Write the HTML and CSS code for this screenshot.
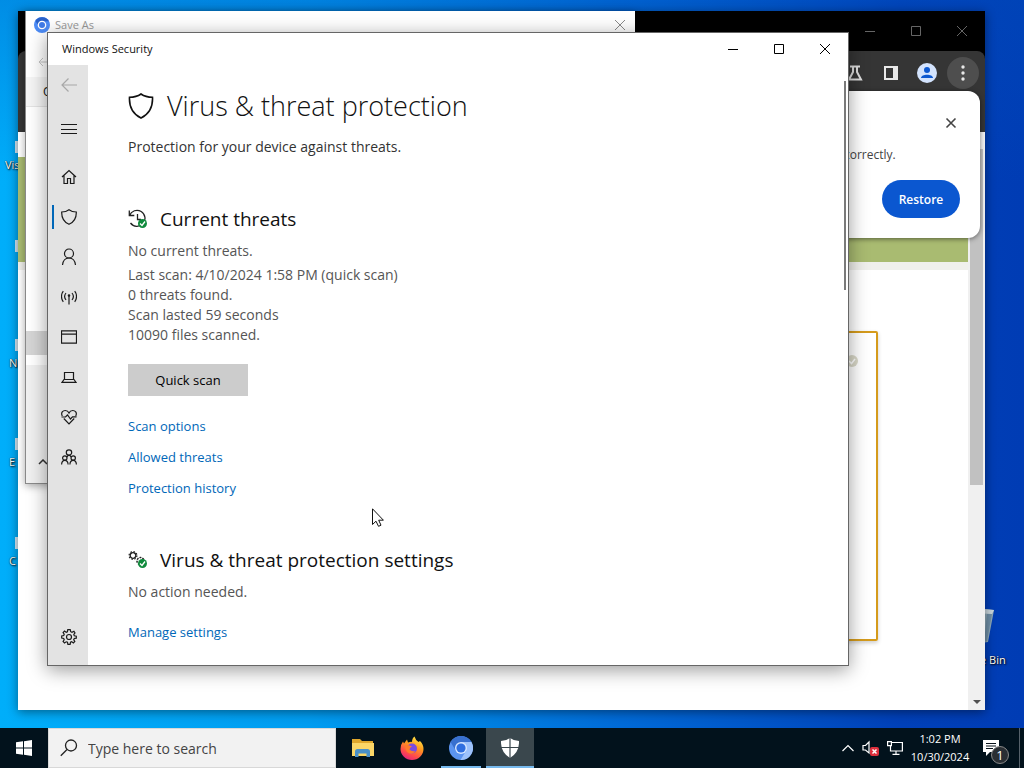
FILE: index.html
```html
<!DOCTYPE html>
<html lang="en">
<head>
    <meta charset="UTF-8">
    <meta name="viewport" content="width=device-width, initial-scale=1.0">
    <title>Windows Security</title>
    <link rel="stylesheet" href="styles.css">
</head>
<body>

<div class="desktop">

    <!-- Desktop icons -->
    <div class="shortcut shortcut-1"><span class="shortcut-pic"></span>Vis</div>
    <div class="shortcut shortcut-2"><span class="shortcut-pic"></span></div>
    <div class="shortcut shortcut-3"><span class="shortcut-pic"></span>N</div>
    <div class="shortcut shortcut-4"><span class="shortcut-pic"></span>E</div>
    <div class="shortcut shortcut-5"><span class="shortcut-pic"></span>C</div>
    <div class="recycle">
        <svg width="40" height="36" viewBox="0 0 40 36">
            <path d="M2 2 L20 0 L40 2 L34 34 L20 36 L8 34 Z" fill="#8fa9b8"/>
            <path d="M2 2 L20 0 L40 2 L38 6 L20 5 L4 6 Z" fill="#c9d6dd"/>
            <path d="M33 6 L38 6 L33 33 L30 34 Z" fill="#6f8fa6"/>
        </svg>
        <span>Recycle Bin</span>
    </div>

    <!-- Browser -->
    <section class="browser">
        <div class="browser-title">
            <button class="caption" aria-label="Minimize"><svg width="12" height="12" viewBox="0 0 12 12"><path d="M1 6.5H11"/></svg></button>
            <button class="caption" aria-label="Maximize"><svg width="12" height="12" viewBox="0 0 12 12"><path d="M1.5 1.5H10.5V10.5H1.5Z"/></svg></button>
            <button class="caption" aria-label="Close"><svg width="12" height="12" viewBox="0 0 12 12"><path d="M1 1L11 11M11 1L1 11"/></svg></button>
        </div>
        <div class="browser-tools">
            <button class="tool" aria-label="Experiments">
                <svg width="16" height="16" viewBox="0 0 16 16" fill="none" stroke="#dedede" stroke-width="2"><path d="M3 1.5H13M6 2V7L2 14.5H14L10 7V2"/></svg>
            </button>
            <button class="tool" aria-label="Side panel">
                <svg width="16" height="16" viewBox="0 0 16 16"><path d="M2 2H14V14H2Z" fill="none" stroke="#e8e8e8" stroke-width="2"/><path d="M10 2H15V14H10Z" fill="#e8e8e8"/></svg>
            </button>
            <button class="tool" aria-label="Profile">
                <svg width="20" height="20" viewBox="0 0 20 20"><circle cx="10" cy="10" r="10" fill="#d3e3fd"/><circle cx="10" cy="7" r="3" fill="#0b57d0"/><path d="M4 15C4 10.500 16 10.500 16 15Z" fill="#0b57d0"/></svg>
            </button>
            <button class="tool tool-menu" aria-label="Menu">
                <svg width="4" height="16" viewBox="0 0 4 16" fill="#e8e8e8"><circle cx="2" cy="2" r="1.700"/><circle cx="2" cy="8" r="1.700"/><circle cx="2" cy="14" r="1.700"/></svg>
            </button>
        </div>
        <div class="bookmarks"></div>
        <div class="page">
            <div class="page-main">
                <div class="page-band"></div>
                <div class="page-box">
                    <svg width="16" height="16" viewBox="0 0 16 16"><circle cx="8" cy="8" r="6" fill="#d9d8c8"/><path d="M5 8L7.500 10.500L11 6" fill="none" stroke="#fff" stroke-width="1.500"/></svg>
                </div>
            </div>
            <div class="page-scroll">
                <div class="page-thumb"></div>
                <svg width="8" height="4" viewBox="0 0 8 4"><path d="M0 0H8L4 4Z" fill="#505050"/></svg>
            </div>
        </div>
        <div class="bubble">
            <button class="bubble-close" aria-label="Dismiss"><svg width="12" height="12" viewBox="0 0 12 12"><path d="M1.500 1.500L10.500 10.500M10.500 1.500L1.500 10.500" stroke="#444" stroke-width="1.600"/></svg></button>
            <p>correctly.</p>
            <button class="restore">Restore</button>
        </div>
    </section>

    <!-- Save dialog -->
    <section class="save">
        <div class="save-title">
            <svg width="16" height="16" viewBox="0 0 24 24"><circle cx="12" cy="12" r="12" fill="#4c8bf5"/><path d="M12 6.500H22.500A12 12 0 0 0 2 5.500L7 14Z" fill="#2a62c9"/><circle cx="12" cy="12" r="6.500" fill="#fff"/><circle cx="12" cy="12" r="4.500" fill="#3f7be8"/></svg>
            <span>Save As</span>
            <button class="save-close" aria-label="Close"><svg width="12" height="12" viewBox="0 0 12 12"><path d="M1 1L11 11M11 1L1 11" stroke="#8a8a8a"/></svg></button>
        </div>
        <div class="save-nav"><svg width="14" height="10" viewBox="0 0 14 10"><path d="M5 1L1 5L5 9M1 5H14" fill="none" stroke="#c4c4c4"/></svg></div>
        <div class="save-tools">Organize</div>
        <div class="save-files"></div>
        <div class="save-row"></div>
        <div class="save-foot"><svg width="10" height="6" viewBox="0 0 10 6"><path d="M1 5L5 1L9 5" fill="none" stroke="#333" stroke-width="1.500"/></svg></div>
    </section>

    <!-- Windows Security -->
    <section class="security">
        <div class="security-title">
            <span>Windows Security</span>
            <button class="caption" aria-label="Minimize"><svg width="12" height="12" viewBox="0 0 12 12"><path d="M1 6.500H11"/></svg></button>
            <button class="caption" aria-label="Maximize"><svg width="12" height="12" viewBox="0 0 12 12"><path d="M1.500 1.500H10.500V10.500H1.500Z"/></svg></button>
            <button class="caption" aria-label="Close"><svg width="12" height="12" viewBox="0 0 12 12"><path d="M1 1L11 11M11 1L1 11"/></svg></button>
        </div>
        <div class="security-body">
            <nav class="rail">
                <button class="rail-item rail-back" aria-label="Back"><svg width="16" height="16" viewBox="0 0 16 16"><path d="M7.500 1.500L1 8L7.500 14.500M1 8H16"/></svg></button>
                <button class="rail-item rail-menu" aria-label="Menu"><svg width="16" height="16" viewBox="0 0 16 16"><path d="M0 3.500H16M0 8.500H16M0 12.500H16"/></svg></button>
                <button class="rail-item" aria-label="Home"><svg width="16" height="16" viewBox="0 0 16 16"><path d="M1 8L8 1.500L15 8M3 6.500V14.500H6.500V9.500H9.500V14.500H13V6.500"/></svg></button>
                <button class="rail-item rail-active" aria-label="Virus &amp; threat protection"><svg width="16" height="16" viewBox="0 0 16 16"><path d="M8 0.700C6 2.300 3.500 3 0.700 3C0.500 9 2.500 12.800 8 15.300C13.500 12.800 15.500 9 15.300 3C12.500 3 10 2.300 8 0.700Z"/></svg></button>
                <button class="rail-item" aria-label="Account protection"><svg width="16" height="18" viewBox="0 0 16 18"><circle cx="8" cy="5.500" r="4.500"/><path d="M1.500 17C2 12.500 4.500 10 8 10S14 12.500 14.500 17"/></svg></button>
                <button class="rail-item" aria-label="Firewall"><svg width="16" height="16" viewBox="0 0 16 16"><path d="M8 7V15.500M5 4C3.400 6 3.400 9 5 11M11 4C12.600 6 12.600 9 11 11M2.300 2.200C-0.100 5 -0.100 10 2.300 12.800M13.700 2.200C16.100 5 16.100 10 13.700 12.800"/><circle cx="8" cy="6.500" r="0.700"/></svg></button>
                <button class="rail-item" aria-label="App control"><svg width="16" height="14" viewBox="0 0 16 14"><path d="M0.500 0.900H15.500V13.100H0.500ZM0.500 4.200H15.500"/></svg></button>
                <button class="rail-item" aria-label="Device security"><svg width="16" height="12" viewBox="0 0 16 12"><path d="M3.500 8.500V1.500H12.500V8.500M3 8.500H13L15 11.300H1Z"/></svg></button>
                <button class="rail-item" aria-label="Device performance"><svg width="16" height="16" viewBox="0 0 16 16"><path d="M1.300 7C-0.500 3.500 2 1.500 4.300 1.500C6 1.500 7.300 2.500 8 4C8.700 2.500 10 1.500 11.700 1.500C14 1.500 16.500 3.500 14.700 7M2.800 9.500L8 14.800L13.200 9.500M0.500 8H4.500L6.500 6L9.500 10L11.500 7.800H15.500"/></svg></button>
                <button class="rail-item" aria-label="Family options"><svg width="16" height="16" viewBox="0 0 16 16"><circle cx="8" cy="3.500" r="2.700"/><circle cx="3.800" cy="9" r="2.200"/><circle cx="12.200" cy="9" r="2.200"/><path d="M0.600 15.500C0.700 12.500 2 11.300 3.800 11.300S7 12.500 7.100 15.500M8.900 15.500C9 12.500 10.300 11.300 12.200 11.300S15.300 12.500 15.400 15.500M6 8C6.500 5.800 9.500 5.800 10 8"/></svg></button>
                <button class="rail-item rail-settings" aria-label="Settings"><svg width="16" height="16" viewBox="0 0 16 16"><path d="M6.800 0.700H9.200L9.700 2.700L11 3.300L12.900 2.200L14 3.900L12.800 5.500L13.300 6.800L15.300 7.200V9.200L13.300 9.500L12.700 10.800L13.800 12.500L12.400 13.900L10.700 12.800L9.500 13.300L9.100 15.300H6.900L6.500 13.300L5.200 12.800L3.500 13.900L2.100 12.500L3.200 10.800L2.700 9.500L0.700 9.100V6.900L2.700 6.500L3.200 5.200L2.100 3.500L3.500 2.100L5.200 3.200L6.400 2.700Z"/><circle cx="8" cy="8" r="2.500"/></svg></button>
            </nav>
            <main class="content">
                <h1>
                    <svg width="26" height="26" viewBox="0 0 26 26"><path d="M13 1C9.500 3.500 6 4.300 1.500 4.300C1 14 4 20.500 13 25C22 20.500 25 14 24.500 4.300C20 4.300 16.500 3.500 13 1Z" fill="none" stroke="#111" stroke-width="1.600"/></svg>
                    Virus &amp; threat protection
                </h1>
                <p class="lead">Protection for your device against threats.</p>

                <h2>
                    <svg width="20" height="20" viewBox="0 0 20 20"><path d="M1.500 6.500A8 8 0 1 1 2.500 14M1.300 1.500V6.500H6.300M9.500 5V10.500H13" fill="none" stroke="#222" stroke-width="1.300"/><circle cx="14.500" cy="14.500" r="4.500" fill="#0f8a3c"/><path d="M12 14.500L14 16.500L17 12.500" fill="none" stroke="#fff" stroke-width="1.300"/></svg>
                    Current threats
                </h2>
                <p class="status">No current threats.</p>
                <ul class="results">
                    <li>Last scan: 4/10/2024 1:58 PM (quick scan)</li>
                    <li>0 threats found.</li>
                    <li>Scan lasted 59 seconds</li>
                    <li>10090 files scanned.</li>
                </ul>
                <button class="scan">Quick scan</button>
                <div class="links">
                    <a href="#">Scan options</a>
                    <a href="#">Allowed threats</a>
                    <a href="#">Protection history</a>
                </div>

                <h2>
                    <svg width="20" height="20" viewBox="0 0 20 20"><circle cx="5" cy="5.500" r="2.800" fill="none" stroke="#222" stroke-width="1.300"/><circle cx="5" cy="5.500" r="3.900" fill="none" stroke="#222" stroke-width="1.200" stroke-dasharray="1.500 1.560"/><circle cx="12.500" cy="11" r="3.500" fill="none" stroke="#222" stroke-width="1.500" stroke-dasharray="2 1"/><circle cx="14.500" cy="13.500" r="4.500" fill="#0f8a3c"/><path d="M12 13.500L14 15.500L17 11.500" fill="none" stroke="#fff" stroke-width="1.300"/></svg>
                    Virus &amp; threat protection settings
                </h2>
                <p class="status">No action needed.</p>
                <div class="links">
                    <a href="#">Manage settings</a>
                </div>
            </main>
            <div class="scrollbar"></div>
        </div>
    </section>

    <svg class="cursor" width="12" height="19" viewBox="0 0 12 19"><path d="M0.500 0.800V16.500L4 13.200L6.500 18.300L9 17.200L6.700 12.200H11.400Z" fill="#fff" stroke="#111"/></svg>
</div>

<footer class="taskbar">
    <button class="start" aria-label="Start">
        <svg width="16" height="16" viewBox="0 0 16 16" fill="#fff"><path d="M0 2.300L7 1.300V7.500H0ZM8 1.200L16 0V7.500H8ZM0 8.500H7V14.700L0 13.700ZM8 8.500H16V16L8 14.800Z"/></svg>
    </button>
    <label class="search">
        <svg width="18" height="18" viewBox="0 0 18 18"><circle cx="11" cy="6.500" r="5.500" fill="none" stroke="#222" stroke-width="1.300"/><path d="M7 10.500L0.800 16.800" stroke="#222" stroke-width="1.300"/></svg>
        <input type="text" placeholder="Type here to search" aria-label="Search">
    </label>
    <div class="apps">
        <button class="app" aria-label="File Explorer">
            <svg width="22" height="20" viewBox="0 0 22 20"><path d="M0 1H8L10 3H21V9H0Z" fill="#e0a72c"/><path d="M0 5H22V18H0Z" fill="#fbd667"/><path d="M3 19V13.500Q3 11 5.500 11H15.500Q18 11 18 13.500V19H14.500V15.500H6.500V19Z" fill="#4a90c8"/></svg>
        </button>
        <button class="app" aria-label="Firefox">
            <svg width="24" height="24" viewBox="0 0 24 24">
                <defs><linearGradient id="fox" x1="0.800" y1="0" x2="0.300" y2="1"><stop offset="0" stop-color="#fff04a"/><stop offset="0.400" stop-color="#ff9a1f"/><stop offset="0.750" stop-color="#ff4a4a"/><stop offset="1" stop-color="#e3237f"/></linearGradient></defs>
                <path d="M3 5.500L4 7.500L7 3.500L8 6.500Q11 5.500 12 6Q12 2 14.500 0.500Q15.500 4 18.500 6L20 5Q23.500 8.500 23.500 13A11.500 11 0 0 1 0.500 13Q0.500 8.500 3 5.500Z" fill="url(#fox)"/>
                <circle cx="12" cy="12.500" r="5" fill="#7a4be0"/>
                <path d="M5 9.500Q8 8 12 10.500Q9.500 11.500 9.500 13.500Q11.500 16 15.500 15Q12 20 7 16Q5 13 5 9.500Z" fill="#ff7a2a"/>
            </svg>
        </button>
        <button class="app app-open" aria-label="Chromium">
            <svg width="24" height="24" viewBox="0 0 24 24"><circle cx="12" cy="12" r="12" fill="#5b94f0"/><path d="M12 6H22.400A12 12 0 0 0 1.600 6L7 15Z" fill="#3870cf"/><path d="M12 6H22.400A12 12 0 0 1 11.500 24L17 15Z" fill="#9dc2fb"/><circle cx="12" cy="12" r="6" fill="#d6e6ff"/><circle cx="12" cy="12" r="4.600" fill="#2f6fe0"/></svg>
        </button>
        <button class="app app-current" aria-label="Windows Security">
            <svg width="18" height="20" viewBox="0 0 18 20"><path d="M9 0Q5 3 0 3Q-0.500 14 9 20Q18.500 14 18 3Q13 3 9 0Z" fill="#fff"/><path d="M9 0V20M0 9.500H18" stroke="#3a474d" stroke-width="1.200"/></svg>
        </button>
    </div>
    <div class="tray">
        <svg width="12" height="8" viewBox="0 0 12 8"><path d="M0.500 7L6 1.500L11.500 7" fill="none" stroke="#fff" stroke-width="1.200"/></svg>
        <svg width="17" height="16" viewBox="0 0 17 16"><path d="M1 5.500H3.500L7 2V13L3.500 10H1Z" fill="none" stroke="#fff" stroke-width="1.200"/><rect x="8" y="7" width="9" height="9" rx="2" fill="#dd2f3c"/><path d="M10.500 9.500L14.500 13.500M14.500 9.500L10.500 13.500" stroke="#fff" stroke-width="1.500"/></svg>
        <svg width="16" height="14" viewBox="0 0 16 14" fill="none" stroke="#fff" stroke-width="1.200"><path d="M5 1.500H15.400V10H3.500V5M9 10V13M5.500 13.300H12.500M0.600 0.600H4.400V4.600H0.600Z"/></svg>
        <div class="clock"><span>1:02 PM</span><span>10/30/2024</span></div>
        <button class="notices" aria-label="Notifications">
            <svg width="16" height="16" viewBox="0 0 16 16"><path d="M0 0H16V12H7L3 16V12H0Z" fill="#fff"/><path d="M3 3.500H13M3 6H13M3 8.500H10" stroke="#0a141c"/></svg>
            <span class="badge">1</span>
        </button>
    </div>
</footer>

</body>
</html>
```

FILE: styles.css
```css
* {
    box-sizing: border-box;
}

body {
    margin: 0;
    height: 100vh;
    display: flex;
    flex-direction: column;
    overflow: hidden;
    font-family: "Open Sans", "Noto Sans", sans-serif;
    font-size: 14px;
    line-height: 20px;
    color: #111;
}

h1, h2, p, ul {
    margin: 0;
    padding: 0;
    font-weight: 400;
}

button {
    font-family: inherit;
    border: none;
    padding: 0;
    background: none;
    display: flex;
    align-items: center;
    justify-content: center;
}

svg {
    flex: none;
}

/* Desktop */
.desktop {
    flex: 1;
    position: relative;
    overflow: hidden;
    background:
        linear-gradient(180deg, rgba(0, 80, 190, 0.35), rgba(0, 80, 190, 0) 25%),
        linear-gradient(90deg, #00aefa 0%, #009cf0 30%, #0068d6 62%, #0040b8 88%, #003cb4 100%);
}

.shortcut {
    position: absolute;
    left: 5px;
    width: 60px;
    font-size: 11px;
    line-height: 16px;
    color: #fff;
    text-shadow: 1px 1px 2px #000, 0 0 1px #000;
}

.shortcut-pic {
    display: block;
    width: 30px;
    height: 12px;
    margin: 0 0 4px 10px;
    background: #d9ecf8;
}

.shortcut-1 { top: 141px; }
.shortcut-2 { top: 240px; }
.shortcut-3 { top: 339px; }
.shortcut-4 { top: 438px; }
.shortcut-5 { top: 537px; }

.shortcut-3,
.shortcut-4,
.shortcut-5 {
    left: 9px;
}

.shortcut-3 .shortcut-pic,
.shortcut-4 .shortcut-pic,
.shortcut-5 .shortcut-pic {
    margin-left: 6px;
}

.recycle {
    position: absolute;
    left: 943px;
    top: 608px;
    width: 68px;
    display: flex;
    flex-direction: column;
    align-items: center;
    gap: 8px;
    font-size: 11px;
    line-height: 16px;
    color: #fff;
    text-shadow: 1px 1px 2px #000, 0 0 1px #000;
}

.recycle svg {
    margin-right: 6px;
}

.caption {
    width: 46px;
    height: 32px;
}

.caption path {
    fill: none;
    stroke: #000;
}

/* Browser */
.browser {
    position: absolute;
    left: 18px;
    top: 11px;
    width: 967px;
    height: 699px;
    display: flex;
    flex-direction: column;
    background: #000;
    box-shadow: 0 2px 10px rgba(0, 0, 0, 0.45);
}

.browser-title {
    height: 40px;
    display: flex;
    align-items: center;
    justify-content: flex-end;
}

.browser-title path {
    stroke: #666;
}

.browser-tools {
    height: 44px;
    padding: 0 6px;
    display: flex;
    align-items: center;
    justify-content: flex-end;
    gap: 4px;
    background: #353535;
    border-radius: 8px 8px 0 0;
}

.tool {
    width: 32px;
    height: 32px;
}

.tool-menu {
    border-radius: 50%;
    background: #4e4e4e;
}

.bookmarks {
    height: 37px;
    background: #353535;
}

.page {
    flex: 1;
    display: flex;
    background: #fff;
}

.page-main {
    flex: 1;
    padding-top: 25px;
}

.page-band {
    height: 113px;
    background: #a9bb71;
    border-bottom: 8px solid #f0f0ec;
}

.page-box {
    height: 310px;
    margin: 61px 90px 0;
    padding: 20px 16px;
    display: flex;
    justify-content: flex-end;
    border: 2px solid #d59b1c;
    border-radius: 2px;
    box-shadow: 0 2px 4px rgba(0, 0, 0, 0.2);
}

.page-scroll {
    width: 17px;
    padding: 17px 2px 6px;
    display: flex;
    flex-direction: column;
    align-items: center;
    justify-content: space-between;
    background: #f0f0f0;
}

.page-thumb {
    width: 13px;
    height: 336px;
    background: #c1c1c1;
}

.bubble {
    position: absolute;
    right: 5px;
    top: 80px;
    width: 320px;
    padding: 20px;
    display: flex;
    flex-direction: column;
    align-items: flex-end;
    background: #fff;
    border-radius: 0 12px 12px 12px;
    box-shadow: 0 1px 5px rgba(0, 0, 0, 0.5);
    font-size: 12px;
    color: #444;
}

.bubble-close {
    width: 18px;
    height: 24px;
}

.bubble p {
    width: 116px;
    margin: 10px 0 15px;
}

.restore {
    width: 78px;
    height: 38px;
    border-radius: 19px;
    background: #0b57d0;
    color: #fff;
    font-size: 12px;
    font-weight: 600;
}

/* Save dialog */
.save {
    position: absolute;
    left: 25px;
    top: 11px;
    width: 610px;
    height: 473px;
    display: flex;
    flex-direction: column;
    background: #fff;
    border: 1px solid #8a8a8a;
    border-top: none;
    border-right: none;
    box-shadow: 0 2px 8px rgba(0, 0, 0, 0.35);
    font-size: 12px;
}

.save-title {
    height: 28px;
    padding: 0 9px 0 8px;
    display: flex;
    align-items: center;
    gap: 5px;
    color: #999;
    font-size: 11px;
}

.save-close {
    width: 12px;
    margin-left: auto;
}

.save-nav {
    height: 38px;
    padding: 14px 12px;
}

.save-tools {
    height: 30px;
    padding: 5px 17px;
    background: #f5f5f5;
    border-bottom: 1px solid #e4e4e4;
}

.save-files {
    flex: 1;
}

.save-row {
    height: 24px;
    margin-bottom: 10px;
    background: #d5d5d5;
}

.save-foot {
    height: 118px;
    padding: 10px 12px 18px;
    display: flex;
    align-items: flex-end;
    background: #f0f0f0;
}

/* Windows Security */
.security {
    position: absolute;
    left: 47px;
    top: 32px;
    width: 802px;
    height: 634px;
    display: flex;
    flex-direction: column;
    background: #fff;
    border: 1px solid #666;
    box-shadow: 0 4px 18px rgba(0, 0, 0, 0.4);
}

.security-title {
    height: 32px;
    display: flex;
    align-items: center;
    font-size: 11px;
}

.security-title span {
    margin: 0 auto 0 14px;
}

.security-body {
    flex: 1;
    display: flex;
}

.rail {
    width: 40px;
    padding-bottom: 8px;
    display: flex;
    flex-direction: column;
    background: #e3e3e3;
}

.rail-item {
    width: 40px;
    height: 40px;
    padding-left: 2px;
}

.rail-item path,
.rail-item circle {
    fill: none;
    stroke: #1a1a1a;
    stroke-width: 1.2;
}

.rail-back path {
    stroke: #a8a8a8;
}

.rail-menu {
    margin: 4px 0 8px;
}

.rail-active {
    background: linear-gradient(#0067b8, #0067b8) 4px center / 2px 24px no-repeat;
}

.rail-settings {
    margin-top: auto;
}

.content {
    flex: 1;
    padding: 21px 40px 0;
}

h1 {
    display: flex;
    align-items: center;
    gap: 13px;
    font-size: 27px;
    font-weight: 300;
    line-height: 40px;
}

h2 {
    display: flex;
    align-items: center;
    gap: 12px;
    margin: 46px 0 6px;
    font-size: 19px;
    line-height: 32px;
}

.lead {
    margin-top: 11px;
    color: #333;
}

.status,
.results {
    color: #555;
}

.results {
    margin: 4px 0 19px;
    list-style: none;
}

.scan {
    width: 120px;
    height: 32px;
    background: #ccc;
    font-size: 13px;
}

.links {
    margin-top: 20px;
    display: flex;
    flex-direction: column;
    align-items: flex-start;
    gap: 11px;
    font-size: 13px;
}

.links a {
    color: #0067b8;
    text-decoration: none;
}

.scrollbar {
    width: 2px;
    height: 209px;
    margin: 16px 2px 0 0;
    background: #7a7a7a;
}

.cursor {
    position: absolute;
    left: 372px;
    top: 508px;
}

/* Taskbar */
.taskbar {
    height: 40px;
    display: flex;
    background: #02121c;
    color: #fff;
}

.start {
    width: 48px;
}

.search {
    width: 288px;
    padding: 0 11px;
    display: flex;
    align-items: center;
    gap: 10px;
    background: #f2f2f2;
    border: 1px solid #d8d8d8;
}

.search input {
    flex: 1;
    min-width: 0;
    padding: 0;
    border: none;
    outline: none;
    background: none;
    font-family: inherit;
    font-size: 14px;
}

.search input::placeholder {
    color: #444;
    opacity: 1;
}

.apps {
    flex: 1;
    padding-left: 3px;
    display: flex;
    gap: 1px;
}

.app {
    width: 48px;
}

.app-open {
    background: linear-gradient(#76b9ed, #76b9ed) center bottom / 40px 2px no-repeat;
}

.app-current {
    background: #3a474d;
    border-bottom: 2px solid #76b9ed;
    padding-top: 2px;
}

.tray {
    margin-right: 4px;
    display: flex;
    align-items: center;
    gap: 8px;
    border-right: 1px solid #56616a;
}

.clock {
    width: 58px;
    display: flex;
    flex-direction: column;
    align-items: center;
    font-size: 11px;
    line-height: 18px;
}

.notices {
    position: relative;
    width: 42px;
    height: 40px;
    padding-right: 14px;
}

.badge {
    position: absolute;
    left: 14px;
    top: 18px;
    width: 18px;
    height: 18px;
    border: 1px solid #888;
    border-radius: 50%;
    background: #2a2f34;
    color: #fff;
    font-size: 13px;
    line-height: 16px;
}
```
